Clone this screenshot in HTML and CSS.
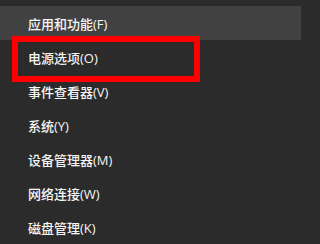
FILE: index.html
```html
<!DOCTYPE html>
<html lang="zh-CN">
<head>
<meta charset="utf-8">
<title>菜单</title>
<link rel="stylesheet" href="styles.css">
</head>
<body>
<div class="menu">
  <div class="item hover">应用和功能(F)</div>
  <div class="item">电源选项(O)</div>
  <div class="item">事件查看器(V)</div>
  <div class="item">系统(Y)</div>
  <div class="item">设备管理器(M)</div>
  <div class="item">网络连接(W)</div>
  <div class="item">磁盘管理(K)</div>
  <div class="mark"></div>
</div>
</body>
</html>
```
FILE: styles.css
```css
html, body {
  margin: 0;
  padding: 0;
  background: #2b2b2b;
  width: 301px;
  height: 244px;
  overflow: hidden;
}
.menu {
  position: relative;
  padding-top: 6px;
  display: flex;
  flex-direction: column;
  font-family: "Open Sans", "Noto Sans CJK SC", sans-serif;
  font-size: 13px;
  font-weight: 500;
  color: #f6f6f6;
}
.item {
  height: 34px;
  line-height: 37px;
  padding-left: 28px;
  white-space: nowrap;
}
.item.hover {
  background: #414141;
}
.mark {
  position: absolute;
  left: 12px;
  top: 36px;
  width: 176px;
  height: 34px;
  border: 6px solid #ff0000;
}
```
